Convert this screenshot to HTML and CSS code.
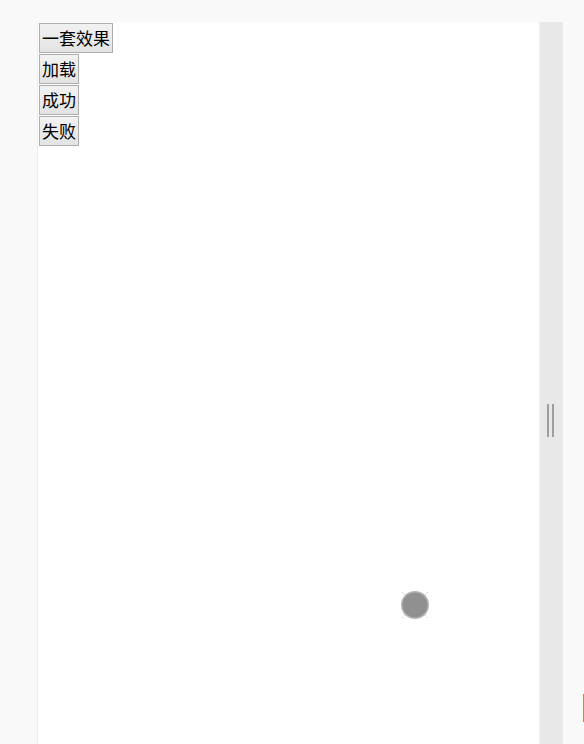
FILE: index.html
```html
<!DOCTYPE html>
<html lang="zh-CN">
<head>
    <meta charset="UTF-8">
    <title>一套效果</title>
    <link rel="stylesheet" href="styles.css">
</head>
<body>

<div class="layout">
    <!-- 预览区 -->
    <div class="preview">
        <div class="actions">
            <button type="button">一套效果</button>
            <button type="button">加载</button>
            <button type="button">成功</button>
            <button type="button">失败</button>
        </div>

        <!-- 状态圆点 -->
        <div class="status-dot">
            <svg width="40" height="40" viewBox="0 0 40 40">
                <g stroke="#cfcfcf" stroke-width="1" stroke-dasharray="1.5 1.2">
                    <path d="M7 7 L11.5 11.5"/>
                    <path d="M33 7 L28.5 11.5"/>
                    <path d="M7 33 L11.5 28.5"/>
                    <path d="M33 33 L28.5 28.5"/>
                </g>
                <circle cx="20" cy="20" r="14" fill="#b4b4b4"/>
                <circle cx="20" cy="20" r="12.5" fill="#909090"/>
            </svg>
        </div>
    </div>

    <!-- 拖动条 -->
    <div class="splitter">
        <span class="grip"></span>
    </div>

    <div class="aside"></div>
</div>

<span class="edge-mark"></span>

</body>
</html>
```

FILE: styles.css
```css
body {
    margin: 0;
    padding: 0;
    background: #f9f9f9;
    font-family: "Liberation Sans", "Noto Sans CJK SC", sans-serif;
    height: 744px;
    overflow: hidden;
    position: relative;
}
.layout {
    display: flex;
    padding: 22px 0 0 38px;
    height: 722px;
}
.preview {
    position: relative;
    width: 501px;
    background: #fff;
    box-shadow: -1px 0 1px rgba(0, 0, 0, 0.04);
}
.actions {
    display: flex;
    flex-direction: column;
    align-items: flex-start;
    gap: 1px;
    padding: 1px 0 0 1px;
}
.actions button {
    font-family: "Noto Sans CJK SC", sans-serif;
    font-size: 17px;
    line-height: 28px;
    height: 30px;
    padding: 0 2px;
    margin: 0;
    color: #000;
    border: 1px solid #adadad;
    background: linear-gradient(#f2f2f2, #e3e3e3);
    border-radius: 0;
}
.status-dot {
    position: absolute;
    left: 357px;
    top: 563px;
    width: 40px;
    height: 40px;
}
.status-dot svg {
    display: block;
}
.splitter {
    width: 24px;
    background: #e8e8e8;
    border-left: 2px solid #ececec;
    box-sizing: border-box;
    padding: 382px 0 0 6px;
}
.grip {
    display: block;
    width: 3px;
    height: 33px;
    border-left: 2px solid #9e9e9e;
    border-right: 2px solid #9e9e9e;
}
.aside {
    flex: 1;
}
.edge-mark {
    position: absolute;
    right: 0;
    top: 694px;
    width: 1px;
    height: 28px;
    background: #e07460;
}
```
